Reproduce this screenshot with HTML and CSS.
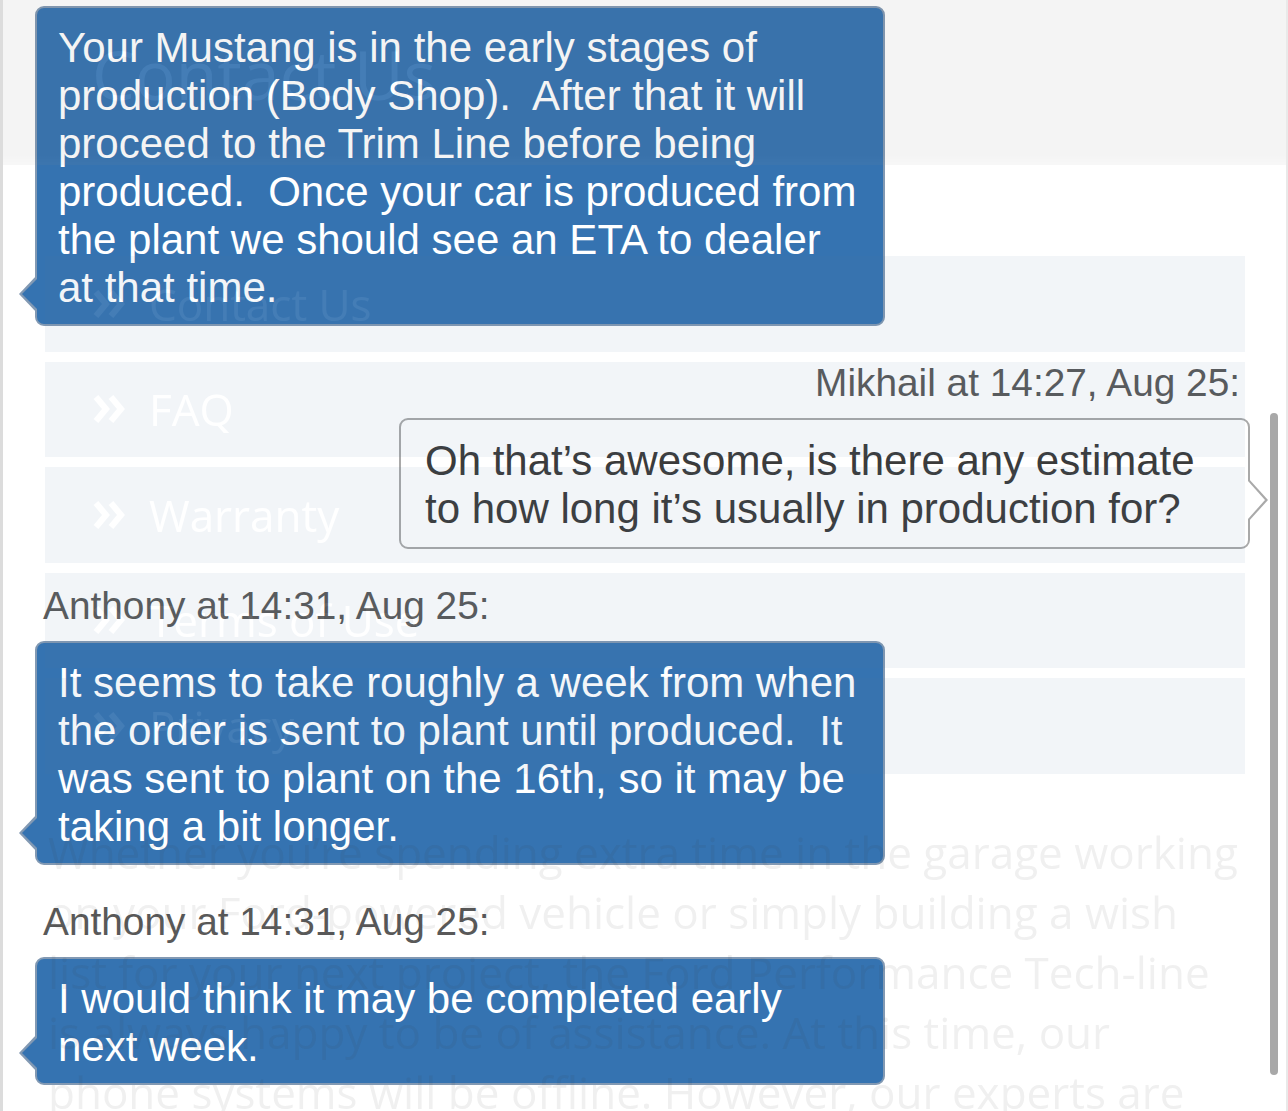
FILE: index.html
```html
<!DOCTYPE html>
<html lang="en">
<head>
<meta charset="utf-8">
<title>Chat</title>
<link rel="stylesheet" href="styles.css">
</head>
<body>
<div class="frame">
  <div class="chat">
    <div class="bubble agent">
      <p class="text">Your Mustang is in the early stages of<br>production (Body Shop).&nbsp; After that it will<br>proceed to the Trim Line before being<br>produced.&nbsp; Once your car is produced from<br>the plant we should see an ETA to dealer<br>at that time.</p>
    </div>

    <div class="meta right">Mikhail at 14:27, Aug 25:</div>
    <div class="bubble user">
      <p class="text">Oh that’s awesome, is there any estimate<br>to how long it’s usually in production for?</p>
    </div>

    <div class="meta">Anthony at 14:31, Aug 25:</div>
    <div class="bubble agent">
      <p class="text">It seems to take roughly a week from when<br>the order is sent to plant until produced.&nbsp; It<br>was sent to plant on the 16th, so it may be<br>taking a bit longer.</p>
    </div>

    <div class="meta">Anthony at 14:31, Aug 25:</div>
    <div class="bubble agent">
      <p class="text">I would think it may be completed early<br>next week.</p>
    </div>
  </div>

  <div class="ghost" aria-hidden="true">
    <header class="hero"><h1>Contact Us</h1></header>
    <ul class="links">
      <li><svg class="chev" viewBox="0 0 34 30"><polyline points="3,3 13,15 3,27"/><polyline points="18,3 28,15 18,27"/></svg><span>Contact Us</span></li>
      <li><svg class="chev" viewBox="0 0 34 30"><polyline points="3,3 13,15 3,27"/><polyline points="18,3 28,15 18,27"/></svg><span>FAQ</span></li>
      <li><svg class="chev" viewBox="0 0 34 30"><polyline points="3,3 13,15 3,27"/><polyline points="18,3 28,15 18,27"/></svg><span>Warranty</span></li>
      <li><svg class="chev" viewBox="0 0 34 30"><polyline points="3,3 13,15 3,27"/><polyline points="18,3 28,15 18,27"/></svg><span>Terms of Use</span></li>
      <li><svg class="chev" viewBox="0 0 34 30"><polyline points="3,3 13,15 3,27"/><polyline points="18,3 28,15 18,27"/></svg><span>Privacy</span></li>
    </ul>
    <p class="intro">Whether you’re spending extra time in the garage working<br>on your Ford-powered vehicle or simply building a wish<br>list for your next project, the Ford Performance Tech-line<br>is always happy to be of assistance. At this time, our<br>phone systems will be offline. However, our experts are</p>
  </div>

  <div class="scroll-thumb"></div>
</div>
</body>
</html>
```

FILE: styles.css
```css
html, body {
  margin: 0;
  padding: 0;
  background: #ffffff;
}

.frame {
  position: relative;
  height: 1111px;
  overflow: hidden;
  border-left: 3px solid #dcdcdc;
  border-right: 2px solid #e9e9e9;
  box-sizing: border-box;
  font-family: "Liberation Sans", Arial, Helvetica, sans-serif;
}

/* ---------- chat ---------- */
.chat {
  display: flex;
  flex-direction: column;
  padding: 6px 36px 0 32px;
}

.bubble {
  position: relative;
  box-sizing: border-box;
  width: 850px;
  border-radius: 9px;
  border: 2px solid;
  font-size: 42px;
  line-height: 48px;
}

.bubble .text {
  margin: 0;
  white-space: nowrap;
}

.bubble.agent {
  align-self: flex-start;
  background: #3573b1;
  border-color: #8299b3;
  color: #ffffff;
  padding: 16px 20px 12px 21px;
}

.bubble.agent::before,
.bubble.agent::after {
  content: "";
  position: absolute;
  width: 0;
  height: 0;
  border-style: solid;
  border-color: transparent;
}

.bubble.agent::before {
  left: -18px;
  bottom: 11px;
  border-width: 19px 18px 19px 0;
  border-right-color: #8299b3;
}

.bubble.agent::after {
  left: -15px;
  bottom: 14px;
  border-width: 16px 16px 16px 0;
  border-right-color: #3573b1;
}

.bubble.user {
  align-self: flex-end;
  width: 851px;
  background: #ffffff;
  border-color: #a9a9a9;
  color: #3b3b3b;
  padding: 17px 20px 14px 24px;
}

.bubble.user::before,
.bubble.user::after {
  content: "";
  position: absolute;
  width: 0;
  height: 0;
  border-style: solid;
  border-color: transparent;
}

.bubble.user::before {
  right: -20px;
  top: 58px;
  border-width: 22px 0 22px 20px;
  border-left-color: #a9a9a9;
}

.bubble.user::after {
  right: -17px;
  top: 61px;
  border-width: 19px 0 19px 17px;
  border-left-color: #ffffff;
}

.meta {
  margin: 35px 0 13px;
  padding: 0 10px 0 8px;
  font-size: 38.8px;
  line-height: 44px;
  color: #595959;
  white-space: nowrap;
}

.meta.right {
  text-align: right;
}

/* ---------- faded page behind the chat ---------- */
.ghost {
  position: absolute;
  inset: 0;
  opacity: 0.075;
  pointer-events: none;
  font-family: "Open Sans", "Noto Sans", sans-serif;
}

.hero {
  height: 165px;
  background: linear-gradient(to bottom, #6d6d6e 0, #6d6d6e 155px, #9a9a9b 165px);
}

.hero h1 {
  margin: 0;
  padding: 40px 0 0 89px;
  font-size: 68px;
  line-height: 68px;
  font-weight: 400;
  color: #ffffff;
}

.links {
  list-style: none;
  margin: 91px 0 0 42px;
  padding: 0;
  width: 1200px;
  display: flex;
  flex-direction: column;
  gap: 10px;
}

.links li {
  height: 95.5px;
  background: #577ea6;
  display: flex;
  align-items: center;
  gap: 22px;
  padding-left: 48px;
  color: #ffffff;
  font-size: 44px;
}

.chev {
  width: 34px;
  height: 30px;
  fill: none;
  stroke: #ffffff;
  stroke-width: 6;
}

.intro {
  margin: 48px 0 0 45px;
  font-size: 44px;
  line-height: 60px;
  color: #3a3a3a;
  white-space: nowrap;
}

.scroll-thumb {
  position: absolute;
  left: 1267px;
  top: 413px;
  width: 8px;
  height: 662px;
  border-radius: 4px;
  background: #a8a8a8;
}
```
